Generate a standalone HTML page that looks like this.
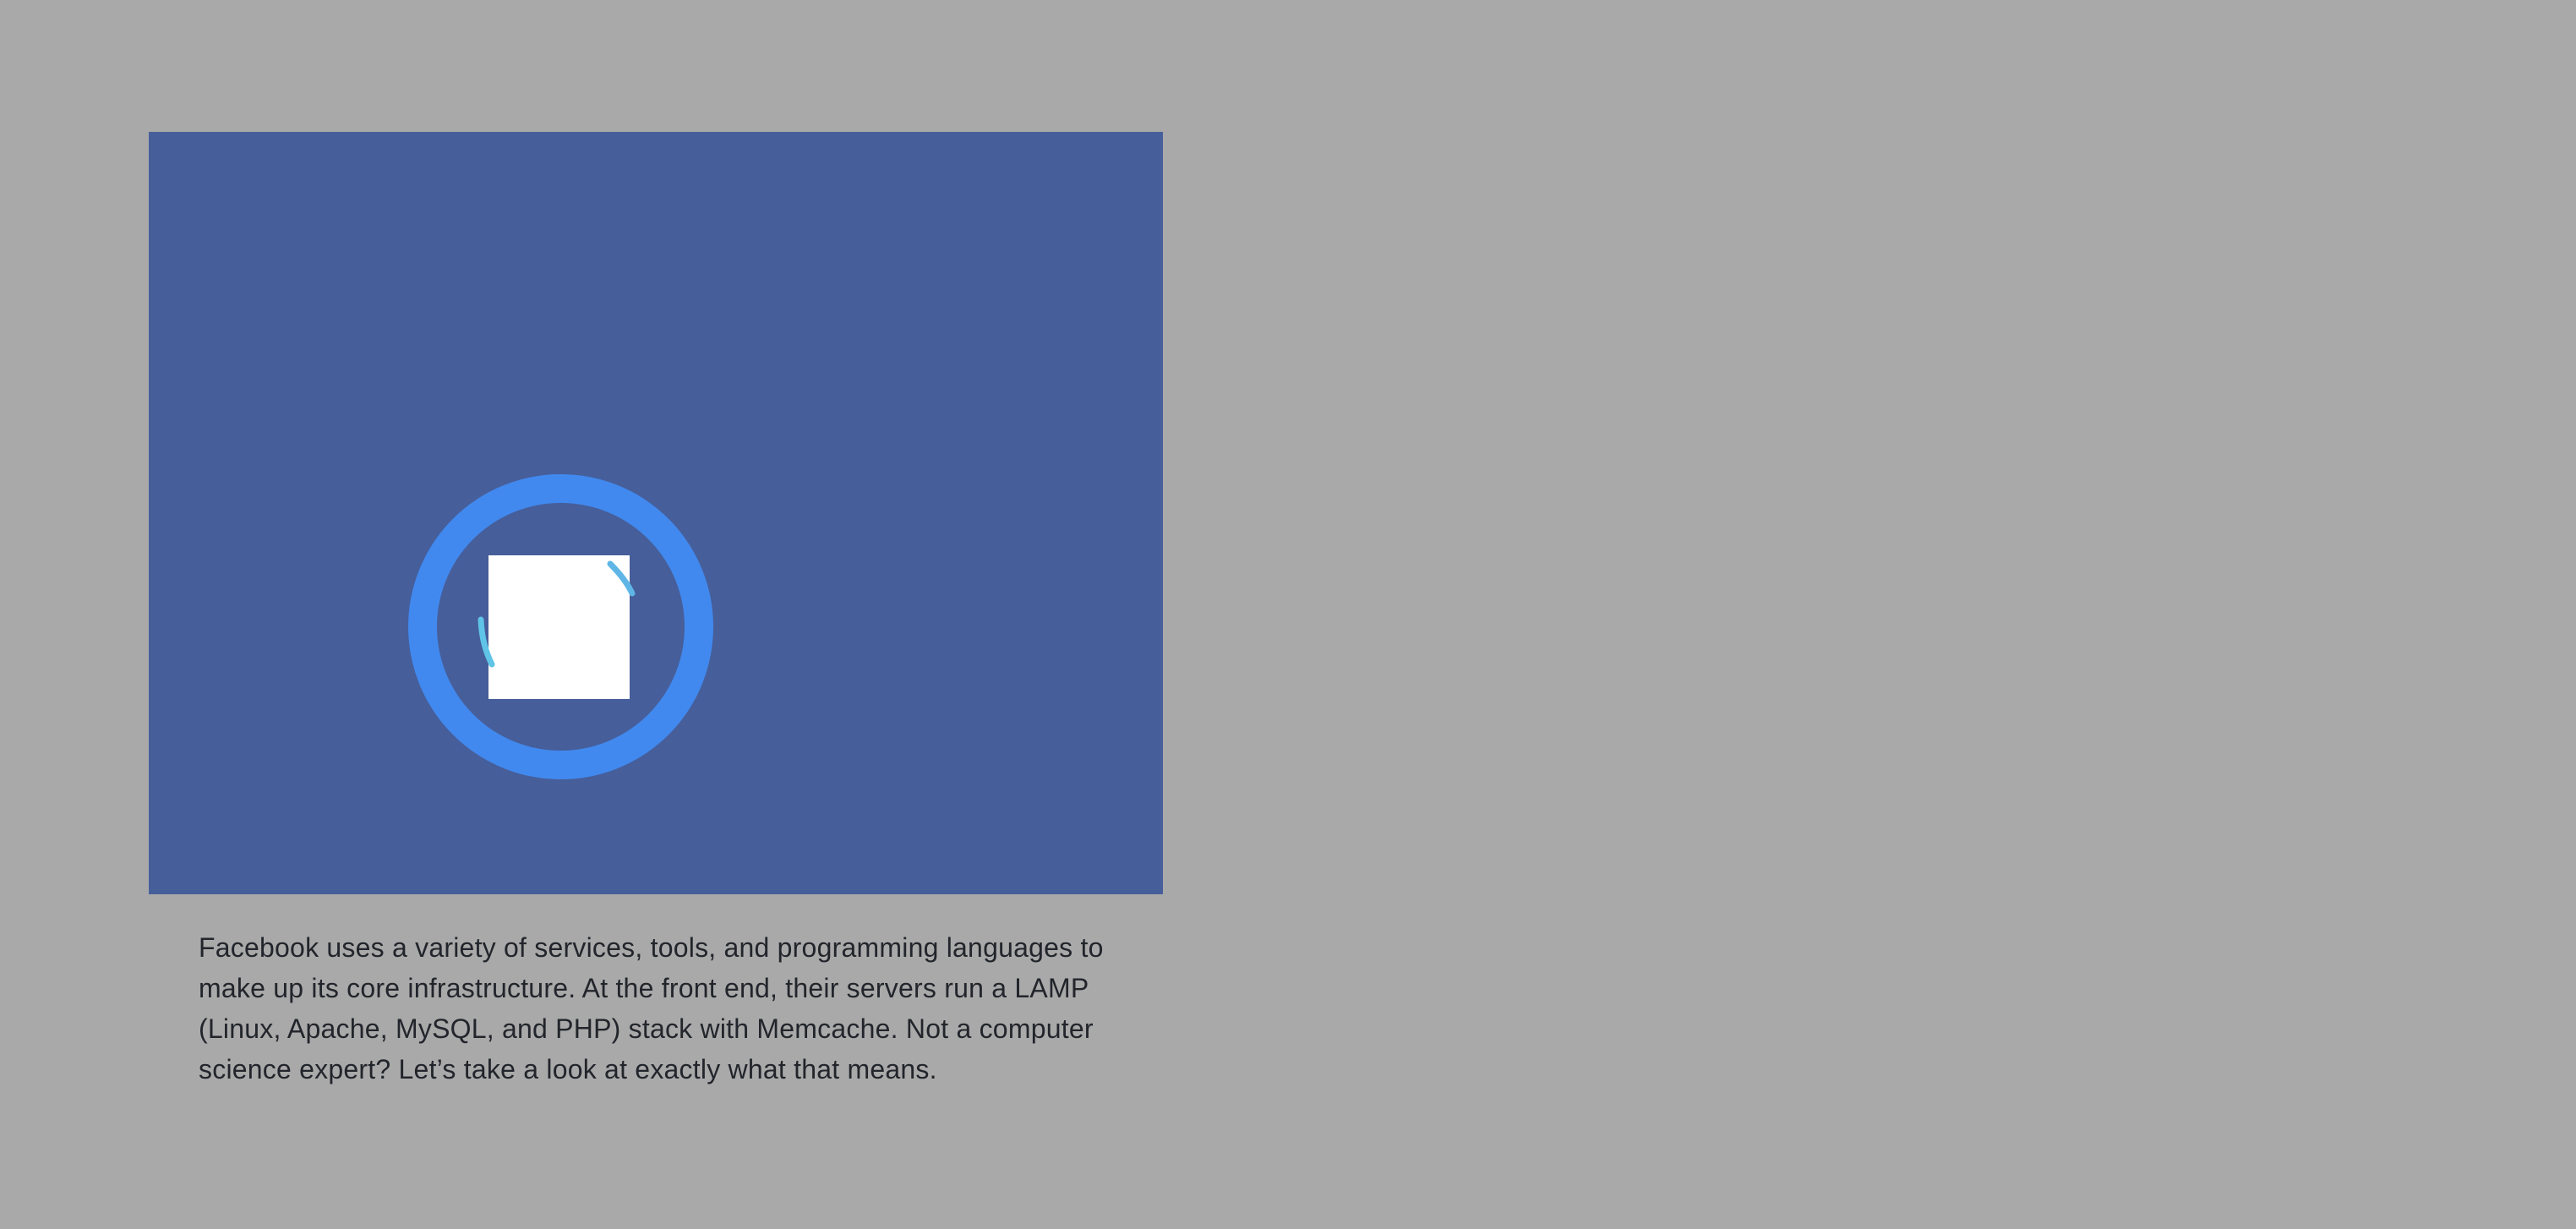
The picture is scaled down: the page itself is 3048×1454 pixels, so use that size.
<!DOCTYPE html>
<html><head><meta charset="utf-8"><style>
html,body{margin:0;padding:0;background:#a9a9a9;width:3048px;height:1454px;overflow:hidden}
.img{position:absolute;left:176px;top:156px;width:1200px;height:902px;background:#465e9a}
.ring{position:absolute;left:483px;top:561px;width:293px;height:293px;border:34px solid #4189ee;border-radius:50%}
.sq{position:absolute;left:578px;top:657px;width:167px;height:170px;background:#fff}
.t{position:absolute;left:235px;top:1097px;font-family:"Liberation Sans",sans-serif;font-size:32px;line-height:48px;color:#22252b;white-space:nowrap;letter-spacing:0.22px}
</style></head><body>
<div class="img"></div>
<div class="ring"></div>
<div class="sq"></div>
<svg style="position:absolute;left:0;top:0" width="3048" height="1454">
<path d="M722 667 Q740 685 748 702" stroke="#5fb6e6" stroke-width="7" fill="none" stroke-linecap="round"/>
<path d="M569 733 Q570 762 582 786" stroke="#5fc4e6" stroke-width="7" fill="none" stroke-linecap="round"/>
</svg>
<div class="t">Facebook uses a variety of services, tools, and programming languages to<br>make up its core infrastructure. At the front end, their servers run a LAMP<br>(Linux, Apache, MySQL, and PHP) stack with Memcache. Not a computer<br>science expert? Let’s take a look at exactly what that means.</div>
</body></html>
